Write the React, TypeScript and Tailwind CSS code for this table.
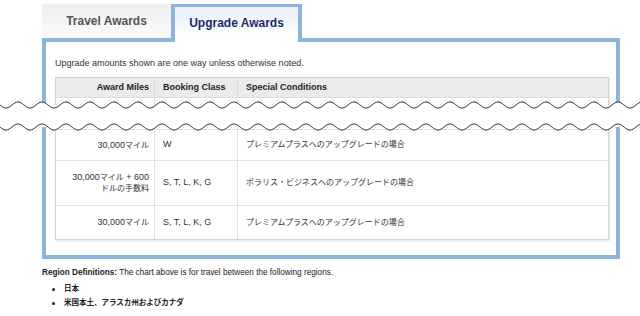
import React from "react";

const rows = [
  {
    miles: (
      <>
        30,000<span className="text-[8px]">マイル</span>
      </>
    ),
    cls: "W",
    cond: "プレミアムプラスへのアップグレードの場合",
    h: "h-[31px]",
  },
  {
    miles: (
      <>
        30,000<span className="text-[8px]">マイル</span> + 600
        <br />
        <span className="text-[8px]">ドルの手数料</span>
      </>
    ),
    cls: "S, T, L, K, G",
    cond: "ポラリス・ビジネスへのアップグレードの場合",
    h: "h-[45px]",
  },
  {
    miles: (
      <>
        30,000<span className="text-[8px]">マイル</span>
      </>
    ),
    cls: "S, T, L, K, G",
    cond: "プレミアムプラスへのアップグレードの場合",
    h: "h-[34px]",
  },
];

function wave(c: number) {
  const pts: string[] = [];
  for (let x = 0; x <= 640; x++) {
    pts.push(`${x},${(c + 3 * Math.sin((x / 24) * 2 * Math.PI)).toFixed(2)}`);
  }
  return pts;
}

function Cut() {
  const top = wave(4);
  const bot = wave(26);
  const fill = [...top, ...[...bot].reverse()].join(" ");
  return (
    <div className="relative h-[22px]">
      <svg className="absolute left-0 -top-[4px] z-10" width="640" height="30">
        <polygon points={fill} fill="#fff" />
        <polyline points={top.join(" ")} fill="none" stroke="#3a3a3a" strokeWidth="1" />
        <polyline points={bot.join(" ")} fill="none" stroke="#3a3a3a" strokeWidth="1" />
      </svg>
    </div>
  );
}

export default function App() {
  return (
    <div className="w-[640px] h-[316px] overflow-hidden bg-white text-[#333] font-['Liberation_Sans','Noto_Sans_CJK_JP',sans-serif]">
      {/* upper part, cut off at the wave */}
      <div className="h-[105px] overflow-hidden">
        <div className="ml-[42px] w-[578px]">
          <div className="flex items-end pt-[4px]">
            <div className="w-[129px] h-[34px] flex items-center justify-center bg-gradient-to-b from-[#efefef] to-[#fbfbfb] text-[12px] font-bold text-[#555]">
              Travel Awards
            </div>
            <div className="relative z-10 -mb-[4px] w-[131px] h-[38px] flex items-center justify-center pb-[3px] border-x-4 border-t-[3px] border-[#8db5dc] bg-gradient-to-b from-[#eaf1f9] to-white text-[12px] font-bold text-[#1d2b6b]">
              Upgrade Awards
            </div>
          </div>
          <div className="border-x-4 border-t-4 border-[#8db5dc] pl-[9px] pr-[7px] pt-[15px]">
            <p className="text-[9px] leading-[12px]">Upgrade amounts shown are one way unless otherwise noted.</p>
            <div className="mt-[8px] border-x border-t border-[#d4d4d4] shadow-[1px_0_2px_rgba(0,0,0,0.1)]">
              <div className="grid grid-cols-[99px_83px_1fr] h-[20px] bg-[#ebebeb] border-b border-[#dadada] text-[9px] font-bold text-[#222]">
                <div className="flex items-center justify-end pr-[5px] border-r border-[#dcdcdc]">Award Miles</div>
                <div className="flex items-center pl-[8px] border-r border-[#dcdcdc]">Booking Class</div>
                <div className="flex items-center pl-[8px]">Special Conditions</div>
              </div>
              <div className="grid grid-cols-[99px_83px_1fr] h-[30px]">
                <div className="border-r border-[#e2e2e2]" />
                <div className="border-r border-[#e2e2e2]" />
                <div />
              </div>
            </div>
          </div>
        </div>
      </div>

      <Cut />

      {/* lower part */}
      <div className="ml-[42px] w-[578px] border-x-4 border-b-4 border-[#8db5dc] pl-[9px] pr-[7px] pb-[15px]">
        <div className="border-x border-b border-[#d4d4d4] shadow-[1px_1px_2px_rgba(0,0,0,0.12)]">
          <div className="grid grid-cols-[99px_83px_1fr] h-[2px]">
            <div className="border-r border-[#e2e2e2]" />
            <div className="border-r border-[#e2e2e2]" />
            <div />
          </div>
          {rows.map((r, i) => (
            <div key={i} className={`grid grid-cols-[99px_83px_1fr] border-t border-[#e2e2e2] text-[9px] ${r.h}`}>
              <div className="flex items-center justify-end text-right leading-[11px] pr-[5px] border-r border-[#e2e2e2]">
                <div>{r.miles}</div>
              </div>
              <div className="flex items-center pl-[8px] border-r border-[#e2e2e2]">{r.cls}</div>
              <div className="flex items-center pl-[8px] text-[8px]">{r.cond}</div>
            </div>
          ))}
        </div>
      </div>

      <div className="ml-[42px] mt-[8px] text-[#222]">
        <p className="text-[8.2px] leading-[12px]">
          <span className="font-bold">Region Definitions:</span> The chart above is for travel between the following regions.
        </p>
        <ul className="mt-[3px] text-[7.5px] font-bold">
          <li className="flex items-center h-[14px] pl-[10px]">
            <span className="w-[3px] h-[3px] rounded-full bg-[#222]" />
            <span className="ml-[9px]">日本</span>
          </li>
          <li className="flex items-center h-[14px] pl-[10px]">
            <span className="w-[3px] h-[3px] rounded-full bg-[#222]" />
            <span className="ml-[9px]">米国本土、アラスカ州およびカナダ</span>
          </li>
        </ul>
      </div>
    </div>
  );
}
